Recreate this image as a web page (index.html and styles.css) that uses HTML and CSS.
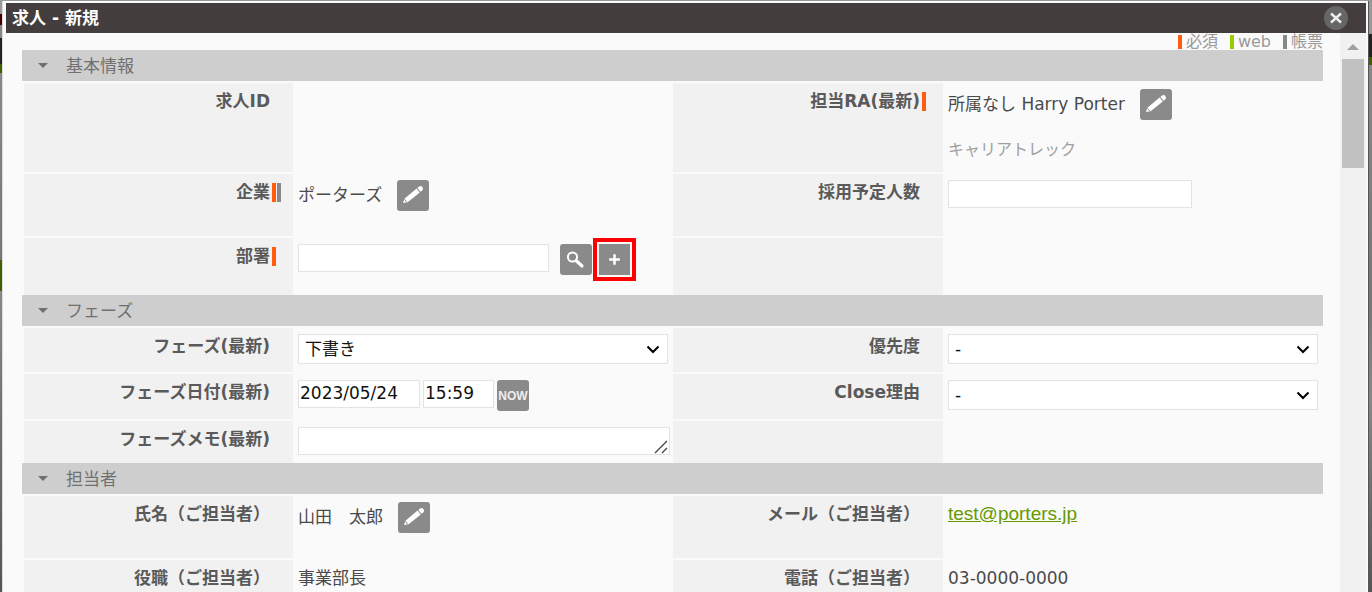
FILE: index.html
```html
<!DOCTYPE html>
<html lang="ja">
<head>
<meta charset="UTF-8">
<meta name="viewport" content="width=device-width, initial-scale=1.0">
<title>求人 - 新規</title>
<link rel="stylesheet" href="styles.css">
</head>
<body>
  <!-- shared icons -->
  <svg class="sprite" aria-hidden="true">
    <symbol id="pencil" viewBox="0 0 32 31">
      <path d="M6 23 L7.4 18.8 L19.6 8.6 L22.8 12.4 L10.6 22.2 Z" fill="#fff"/>
      <path d="M20.4 7.9 L22 6.6 Q24 5.4 25.4 7 Q26.8 8.8 25.2 10.4 L23.6 11.7 Z" fill="#fff"/>
      <path d="M7.4 19.2 L9.8 22.2" stroke="#8a8a8a" stroke-width="1"/>
    </symbol>
    <symbol id="search" viewBox="0 0 32 31">
      <circle cx="12.5" cy="13" r="4.6" fill="none" stroke="#fff" stroke-width="2"/>
      <path d="M16 16.5 L22 22" stroke="#fff" stroke-width="3.2" stroke-linecap="round"/>
    </symbol>
    <symbol id="plus" viewBox="0 0 32 31">
      <path d="M16 10 V21 M10.5 15.5 H21.5" stroke="#fff" stroke-width="2.6"/>
    </symbol>
  </svg>

  <div class="dialog">
    <header class="title-bar">
      <h1>求人 - 新規</h1>
      <button type="button" class="close" aria-label="閉じる">
        <svg viewBox="0 0 24 24"><path d="M7 7.5 L17 16.5 M17 7.5 L7 16.5" stroke="#eee" stroke-width="2.4"/></svg>
      </button>
    </header>

    <div class="body">
      <form class="content">
        <div class="legend">
          <span class="legend-item"><i class="mark required"></i>必須</span>
          <span class="legend-item"><i class="mark web"></i>web</span>
          <span class="legend-item"><i class="mark report"></i>帳票</span>
        </div>

        <h2 class="section"><i class="arrow"></i>基本情報</h2>
        <div class="fields">
          <div class="name">求人ID<span class="marks"></span></div>
          <div class="value"></div>
          <div class="name">担当RA(最新)<span class="marks"><i class="mark required"></i></span></div>
          <div class="value">
            <div class="line">
              <span class="text">所属なし Harry Porter</span>
              <button type="button" class="icon-btn" aria-label="担当RAを編集"><svg><use href="#pencil"/></svg></button>
            </div>
            <div class="note">キャリアトレック</div>
          </div>

          <div class="name">企業<span class="marks"><i class="mark required"></i><i class="mark report"></i></span></div>
          <div class="value">
            <div class="line lookup">
              <span class="text">ポーターズ</span>
              <button type="button" class="icon-btn" aria-label="企業を編集"><svg><use href="#pencil"/></svg></button>
            </div>
          </div>
          <div class="name"><label for="headcount">採用予定人数</label><span class="marks"></span></div>
          <div class="value"><input type="text" id="headcount" class="short"></div>

          <div class="name"><label for="dept">部署</label><span class="marks"><i class="mark required"></i></span></div>
          <div class="value">
            <div class="line picker">
              <input type="text" id="dept" class="dept">
              <button type="button" class="icon-btn" aria-label="部署を検索"><svg><use href="#search"/></svg></button>
              <button type="button" class="icon-btn add" aria-label="部署を追加"><svg><use href="#plus"/></svg></button>
            </div>
          </div>
          <div class="name"></div>
          <div class="value"></div>
        </div>

        <h2 class="section"><i class="arrow"></i>フェーズ</h2>
        <div class="fields">
          <div class="name"><label for="phase">フェーズ(最新)</label><span class="marks"></span></div>
          <div class="value"><select id="phase"><option>下書き</option></select></div>
          <div class="name"><label for="priority">優先度</label><span class="marks"></span></div>
          <div class="value"><select id="priority"><option>-</option></select></div>

          <div class="name"><label for="phaseDate">フェーズ日付(最新)</label><span class="marks"></span></div>
          <div class="value">
            <div class="line dates">
              <input type="text" id="phaseDate" class="date" value="2023/05/24">
              <input type="text" class="time" value="15:59" aria-label="フェーズ時刻">
              <button type="button" class="icon-btn now">NOW</button>
            </div>
          </div>
          <div class="name"><label for="reason">Close理由</label><span class="marks"></span></div>
          <div class="value"><select id="reason"><option>-</option></select></div>

          <div class="name"><label for="memo">フェーズメモ(最新)</label><span class="marks"></span></div>
          <div class="value memo"><textarea id="memo" rows="1"></textarea></div>
          <div class="name"></div>
          <div class="value"></div>
        </div>

        <h2 class="section"><i class="arrow"></i>担当者</h2>
        <div class="fields">
          <div class="name">氏名（ご担当者）<span class="marks"></span></div>
          <div class="value">
            <div class="line lookup">
              <span class="text">山田　太郎</span>
              <button type="button" class="icon-btn" aria-label="氏名を編集"><svg><use href="#pencil"/></svg></button>
            </div>
          </div>
          <div class="name">メール（ご担当者）<span class="marks"></span></div>
          <div class="value"><a class="mail" href="mailto:test@porters.jp">test@porters.jp</a></div>

          <div class="name">役職（ご担当者）<span class="marks"></span></div>
          <div class="value">事業部長</div>
          <div class="name">電話（ご担当者）<span class="marks"></span></div>
          <div class="value">03-0000-0000</div>
        </div>
      </form>

      <div class="scrollbar">
        <i class="scroll-up"></i>
        <div class="thumb"></div>
      </div>
    </div>
  </div>
</body>
</html>
```
FILE: styles.css
```css
* {
  box-sizing: border-box;
}

body {
  margin: 0;
  height: 100vh;
  overflow: hidden;
  padding: 1px 3px 0 2px;
  font-family: "DejaVu Sans", "Noto Sans CJK JP", sans-serif;
  font-size: 17px;
  line-height: 24px;
  color: #4a4a4a;
  background:
    linear-gradient(#999 34px, #222 34px, #222 57px, #3f5f00 57px, #3f5f00 65px, #888 65px, #777 300px, #888 400px, #555) right / 3px 100% no-repeat,
    linear-gradient(#999 14px, #400 14px, #400 25px, #888 25px, #888 38px, #222 38px, #222 64px, #3f5f00 64px, #3f5f00 73px, #888 73px, #777 260px, #3f5f00 260px, #3f5f00 291px, #888 291px, #555);
}

.sprite {
  display: none;
}

h1, h2 {
  margin: 0;
}

.dialog {
  display: flex;
  flex-direction: column;
  height: 100%;
  padding: 2px 2px 0 3px;
  background: #fafafa;
  border-left: 1px solid #ddd;
  border-right: 1px solid #555;
}

.title-bar {
  display: flex;
  justify-content: space-between;
  align-items: center;
  height: 30px;
  flex-shrink: 0;
  padding: 0 18px 0 6px;
  background: #433e3d;
  color: #fff;
}

.title-bar h1 {
  font-size: 17px;
  line-height: 28px;
}

.close {
  width: 24px;
  height: 24px;
  padding: 0;
  border: 0;
  border-radius: 50%;
  background: #666;
}

.close svg {
  display: block;
}

.body {
  display: flex;
  flex: 1;
  min-height: 0;
}

.content {
  flex: 1;
  padding: 0 17px 0 16px;
  overflow: hidden;
}

/* legend */
.legend {
  display: flex;
  justify-content: flex-end;
  gap: 12px;
  height: 17px;
  font-size: 16px;
  line-height: 18px;
  color: #999;
}

.legend-item {
  display: flex;
  align-items: center;
  gap: 4px;
}

.mark {
  width: 4px;
  height: 19px;
}

.legend .mark {
  height: 14px;
}

.required {
  background: #ff5c0d;
}

.web {
  background: #99cc00;
}

.report {
  background: #888;
}

.section {
  display: flex;
  align-items: center;
  height: 31px;
  padding-left: 16px;
  gap: 18px;
  background: #cecece;
  color: #707070;
  font-size: 17px;
  font-weight: normal;
}

.arrow {
  border: 5px solid transparent;
  border-top-color: #707070;
  border-bottom: 0;
}

/* field grid */
.fields {
  display: grid;
  grid-template-columns: 269px 1fr 270px 1fr;
  row-gap: 2px;
  padding: 2px 0 0 2px;
}

.name {
  display: flex;
  justify-content: flex-end;
  padding-top: 6px;
  background: #f1f1f1;
  color: #5a5a5a;
  font-weight: bold;
}

.marks {
  display: flex;
  gap: 1px;
  width: 23px;
  padding: 3px 0 0 2px;
}

.value {
  padding: 6px 5px 8px 5px;
}

.line {
  display: flex;
  align-items: flex-start;
}

.line .text {
  padding-right: 15px;
  line-height: 31px;
}

.lookup {
  min-height: 48px;
}

.picker {
  min-height: 43px;
}

.note {
  margin-top: 16px;
  line-height: 28px;
  font-size: 16px;
  color: #a0a0a0;
}

input, select, textarea {
  display: block;
  height: 28px;
  margin: 0;
  border: 1px solid #e3e3e3;
  border-radius: 0;
  background: #fff;
  color: #111;
  font: inherit;
}

input {
  padding: 0 1px 2px;
}

.short {
  width: 244px;
}

.dept {
  width: 251px;
  margin-right: 11px;
}

select {
  width: 100%;
  height: 30px;
  padding: 0 6px;
  appearance: none;
  background: #fff url("data:image/svg+xml,%3Csvg xmlns='http://www.w3.org/2000/svg' width='14' height='9'%3E%3Cpath d='M1.5 1.5 L7 7 L12.5 1.5' fill='none' stroke='%23000' stroke-width='2'/%3E%3C/svg%3E") no-repeat right 7px center;
}

.dates {
  gap: 3px;
}

.date {
  width: 122px;
}

.time {
  width: 71px;
}

.memo {
  padding-right: 3px;
}

textarea {
  width: 100%;
  resize: vertical;
  overflow: hidden;
}

textarea::-webkit-resizer {
  background: url("data:image/svg+xml,%3Csvg xmlns='http://www.w3.org/2000/svg' width='15' height='15'%3E%3Cpath d='M1 14 L13 2 M8 14 L13 9' fill='none' stroke='%23444' stroke-width='1.3'/%3E%3C/svg%3E") no-repeat right bottom;
}

.icon-btn {
  width: 32px;
  height: 31px;
  padding: 0;
  border: 0;
  border-radius: 3px;
  background: #8a8a8a;
}

.icon-btn svg {
  display: block;
  width: 100%;
  height: 31px;
}

.add {
  width: 31px;
  margin-left: 7px;
  outline: 4px solid #f00;
  outline-offset: 2px;
  border-radius: 0;
}

.now {
  color: #eee;
  font: bold 12px "Liberation Sans", sans-serif;
}

.mail {
  color: #669900;
  font-family: "Liberation Sans", sans-serif;
  font-size: 19px;
}

/* scrollbar */
.scrollbar {
  width: 26px;
  padding: 11px 2px 0;
  background: #f1f1f1;
}

.scroll-up {
  display: block;
  width: 12px;
  margin: 0 auto 9px;
  border: 6px solid transparent;
  border-top: 0;
  border-bottom-color: #a0a0a0;
}

.thumb {
  height: 109px;
  background: #c1c1c1;
}
```
